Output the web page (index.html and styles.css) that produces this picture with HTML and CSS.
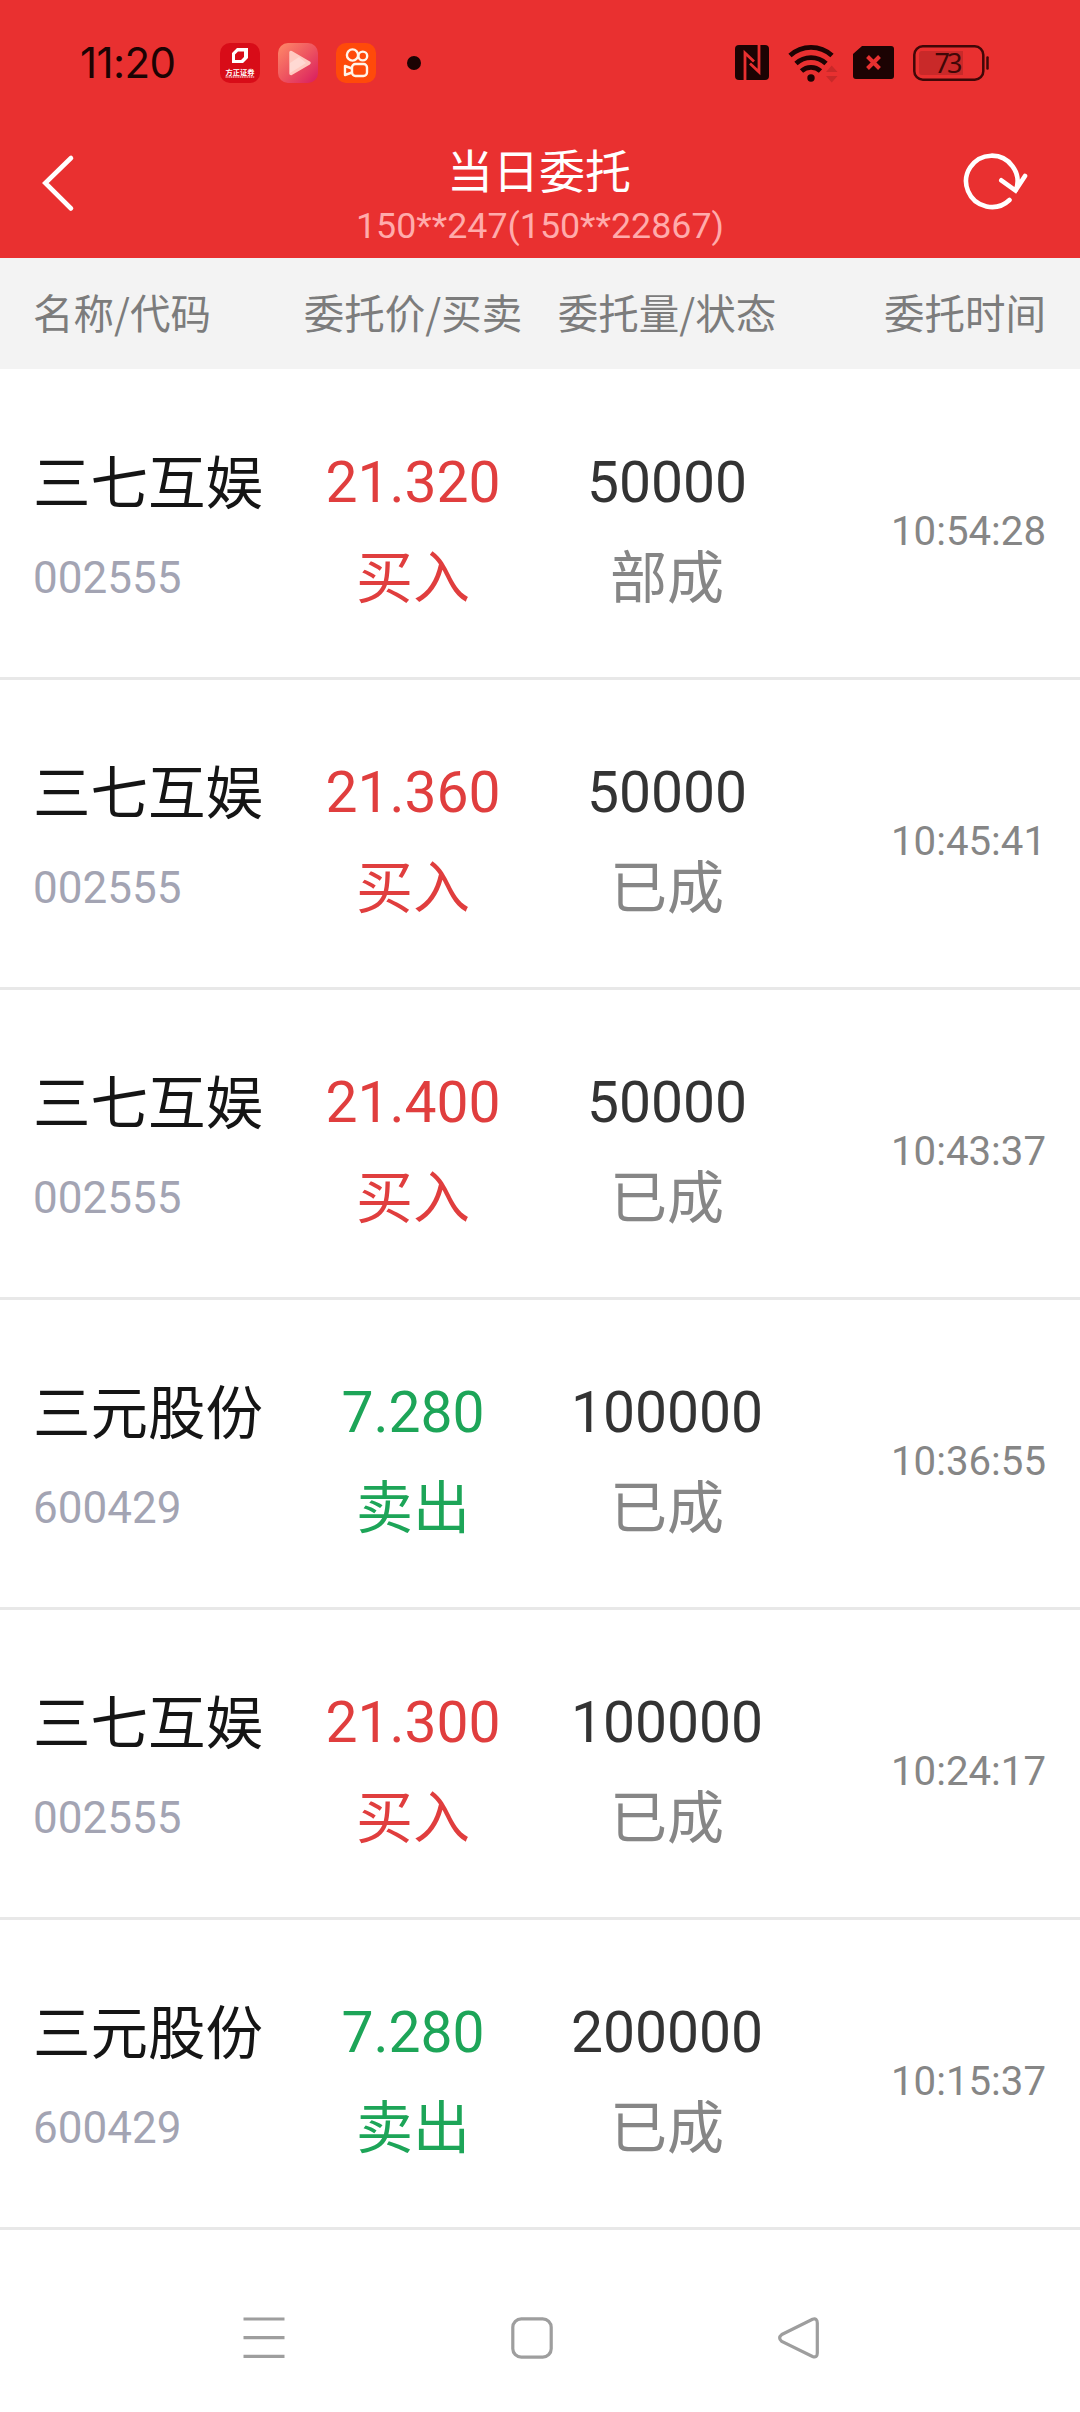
FILE: index.html
```html
<!DOCTYPE html>
<html lang="zh-CN">
<head>
<meta charset="utf-8">
<title>当日委托</title>
<link rel="stylesheet" href="styles.css">
</head>
<body>
<header class="top">
  <div class="status">
    <span class="clock">11:20</span>
    <div class="apps">
      <svg width="40" height="40" viewBox="0 0 40 40"><rect width="40" height="40" rx="10" fill="#d80c18"/><path fill="#fff" fill-rule="evenodd" d="M17 5h11v10l-5 5H12V10zM18 8.500l-3 3v5.500h6l3-3V8.500z"/><text class="brand" x="20" y="31.500" textLength="29" lengthAdjust="spacingAndGlyphs">方正证券</text><path stroke="#fff" stroke-opacity=".7" stroke-width="1.300" stroke-dasharray="1.300 .5" d="M5.500 34h29"/></svg>
      <svg width="40" height="40" viewBox="0 0 40 40"><defs><linearGradient id="play" x1="0" y1="0" x2="1" y2="1"><stop offset="0" stop-color="#ff8a68"/><stop offset=".5" stop-color="#ee5560"/><stop offset="1" stop-color="#d81b60"/></linearGradient></defs><rect width="40" height="40" rx="10" fill="url(#play)"/><path d="M13 9.500v21L31 20z" fill="#ffc9c0" stroke="#ffc9c0" stroke-width="3.500" stroke-linejoin="round"/><path d="M12 20l9-6 7 6-16 10z" fill="#fff" opacity=".3"/></svg>
      <svg width="40" height="40" viewBox="0 0 40 40"><rect width="40" height="40" rx="10" fill="#ff4a0a"/><g fill="none" stroke="#fff4ea" stroke-width="2.400"><circle cx="16.500" cy="12" r="5.600"/><circle cx="26.800" cy="13" r="4.400"/><rect x="16" y="21" width="15" height="12" rx="3.500"/><path stroke-linejoin="round" d="M16 25.500l-7-2.500v9l7-2.500"/></g></svg>
    </div>
    <i class="dot"></i>
    <div class="system">
      <svg width="34" height="35" viewBox="0 0 34 35"><rect width="34" height="35" rx="4" fill="#1c0303"/><path d="M10 35V8l9 8.500M24 0v27l-9-8.500" fill="none" stroke="#e93030" stroke-width="2.800"/></svg>
      <svg class="wifi" width="50" height="40" viewBox="0 0 50 40"><g fill="none" stroke="#1c0303" stroke-width="4.800"><path d="M2 12.500a31 31 0 0 1 42 0"/><path d="M8 20.500a22 22 0 0 1 30 0"/><path d="M13.500 28a14 14 0 0 1 19 0"/></g><circle cx="23" cy="35" r="3.700" fill="#1c0303"/><path fill="#c92929" d="M38 29l5.700-6.500 5.800 6.500zM38 33h11.500l-5.800 6.500z"/></svg>
      <svg class="sim" width="41" height="33" viewBox="0 0 41 33"><path fill="#1c0303" d="M9 0h29a3 3 0 0 1 3 3v27a3 3 0 0 1-3 3H3a3 3 0 0 1-3-3V8z"/><path d="M14.500 10.500l12 12M26.500 10.500l-12 12" stroke="#e93030" stroke-width="4"/></svg>
      <svg class="battery" width="77" height="36" viewBox="0 0 77 36"><rect x="1.300" y="1.300" width="69" height="33.400" rx="8.500" fill="none" stroke="#400707" stroke-width="2.500"/><path fill="#c92929" d="M9 6h41v24H9a3 3 0 0 1-3-3V9a3 3 0 0 1 3-3z"/><path d="M74.500 12.500v11" stroke="#400707" stroke-width="2.500" stroke-linecap="round"/><text x="21.500" y="27.500" textLength="28" class="charge">73</text></svg>
    </div>
  </div>
  <div class="bar">
    <svg width="70" height="64" viewBox="0 0 70 64"><path class="line" d="M39 8L13.300 33l25.700 25.500"/></svg>
    <div class="heading"><h1>当日委托</h1><p>150**247(150**22867)</p></div>
    <svg width="70" height="64" viewBox="0 0 70 64"><path class="line" d="M49.500 50A25.700 25.700 0 1 1 56 40M41.300 30.300L55.500 40.500l9.500-14.500"/></svg>
  </div>
</header>
<main>
  <div class="cols head"><span>名称/代码</span><span>委托价/买卖</span><span>委托量/状态</span><span>委托时间</span></div>
  <section class="orders">
    <article class="cols order buy">
      <div><b class="name">三七互娱</b><span class="code">002555</span></div>
      <div><b class="num">21.320</b><span class="word">买入</span></div>
      <div class="amount"><b class="num">50000</b><span class="word">部成</span></div>
      <time>10:54:28</time>
    </article>
    <article class="cols order buy">
      <div><b class="name">三七互娱</b><span class="code">002555</span></div>
      <div><b class="num">21.360</b><span class="word">买入</span></div>
      <div class="amount"><b class="num">50000</b><span class="word">已成</span></div>
      <time>10:45:41</time>
    </article>
    <article class="cols order buy">
      <div><b class="name">三七互娱</b><span class="code">002555</span></div>
      <div><b class="num">21.400</b><span class="word">买入</span></div>
      <div class="amount"><b class="num">50000</b><span class="word">已成</span></div>
      <time>10:43:37</time>
    </article>
    <article class="cols order sell">
      <div><b class="name">三元股份</b><span class="code">600429</span></div>
      <div><b class="num">7.280</b><span class="word">卖出</span></div>
      <div class="amount"><b class="num">100000</b><span class="word">已成</span></div>
      <time>10:36:55</time>
    </article>
    <article class="cols order buy">
      <div><b class="name">三七互娱</b><span class="code">002555</span></div>
      <div><b class="num">21.300</b><span class="word">买入</span></div>
      <div class="amount"><b class="num">100000</b><span class="word">已成</span></div>
      <time>10:24:17</time>
    </article>
    <article class="cols order sell">
      <div><b class="name">三元股份</b><span class="code">600429</span></div>
      <div><b class="num">7.280</b><span class="word">卖出</span></div>
      <div class="amount"><b class="num">200000</b><span class="word">已成</span></div>
      <time>10:15:37</time>
    </article>
  </section>
</main>
<nav>
  <svg width="42" height="42" viewBox="0 0 42 42"><path d="M.5 2h41M.5 20.700h41M.5 39.300h41"/></svg>
  <svg width="42" height="42" viewBox="0 0 42 42"><rect x="1.800" y="1.800" width="38.400" height="38.400" rx="8.500"/></svg>
  <svg width="42" height="42" viewBox="0 0 42 42"><path d="M3.800 17.500L34.500 2.300Q39.300.8 39.300 6v30q0 5.200-4.800 3.500L3.800 24.500Q-.5 21 3.800 17.500z"/></svg>
</nav>
</body>
</html>
```
FILE: styles.css
```css
* { box-sizing: border-box; }
body { margin: 0; width: 1080px; height: 2412px; background: #fff; font-family: Roboto, sans-serif; overflow: hidden; }
svg { display: block; flex: none; overflow: visible; }
h1, p { margin: 0; font-weight: 400; }
b { font-weight: 400; }

.top { height: 258px; background: #e93030; }
.status { display: flex; align-items: center; height: 124px; padding: 1px 90px 0 80px; }
.clock { width: 140px; font: 400 42px/60px Inter, sans-serif; letter-spacing: -.6px; color: #1c0303; }
.apps { display: flex; gap: 18px; }
.brand { font: 700 7px "Noto Sans CJK SC", sans-serif; fill: #fff; text-anchor: middle; }
.dot { width: 14px; height: 14px; margin-left: 31px; border-radius: 50%; background: #1c0303; }
.system { display: flex; align-items: center; margin-left: auto; }
.wifi { margin-left: 19px; }
.sim { margin-left: 15px; }
.battery { margin-left: 19px; }
.charge { font: 400 27px "Noto Sans", sans-serif; fill: #400707; }

.bar { display: flex; justify-content: space-between; height: 134px; padding: 0 50px 0 32px; }
.bar > svg { margin-top: 26px; }
.line { fill: none; stroke: #fff; stroke-width: 4.600; stroke-linecap: round; }
.heading { padding-top: 14px; text-align: center; color: #fff; transform: translateX(9px); }
.heading h1 { font: 400 46px/60px "Noto Sans CJK SC", sans-serif; transform: translateX(-1px); }
.heading p { font-size: 35.800px; line-height: 56px; color: #ffabab; }

.cols { display: grid; grid-template-columns: 286px 254px 254px 1fr; text-align: center; }
.cols > :first-child { padding-left: 33px; text-align: left; }
.cols > :last-child { padding-right: 34px; text-align: right; }
.head { height: 111px; margin-bottom: 1px; background: #f3f3f3; color: #7c7c7c; font: 400 40.500px/107px "Noto Sans CJK SC", sans-serif; white-space: nowrap; }
.order { height: 310px; padding-top: 65px; border-bottom: 3px solid #e8e8e8; }
.order b, .order span { display: block; }
.name, .word { font: 400 57px/88px "Noto Sans CJK SC", sans-serif; }
.name { margin-bottom: 6px; font-size: 57.500px; color: #151515; }
.num { padding-top: 1px; font-size: 57px; line-height: 94px; }
.word { margin-top: -1px; }
.code { font-size: 44px; line-height: 98px; color: #a3a4b3; }
.buy { color: #e03e3e; }
.sell { color: #1da558; }
.amount .num { color: #333; }
.amount .word { color: #868686; }
time { font-size: 40.200px; line-height: 194px; color: #868686; }

nav { display: flex; justify-content: space-between; padding: 87px 260px 0 243px; }
nav svg { fill: none; stroke: #9e9e9e; stroke-width: 3.200; }
```
